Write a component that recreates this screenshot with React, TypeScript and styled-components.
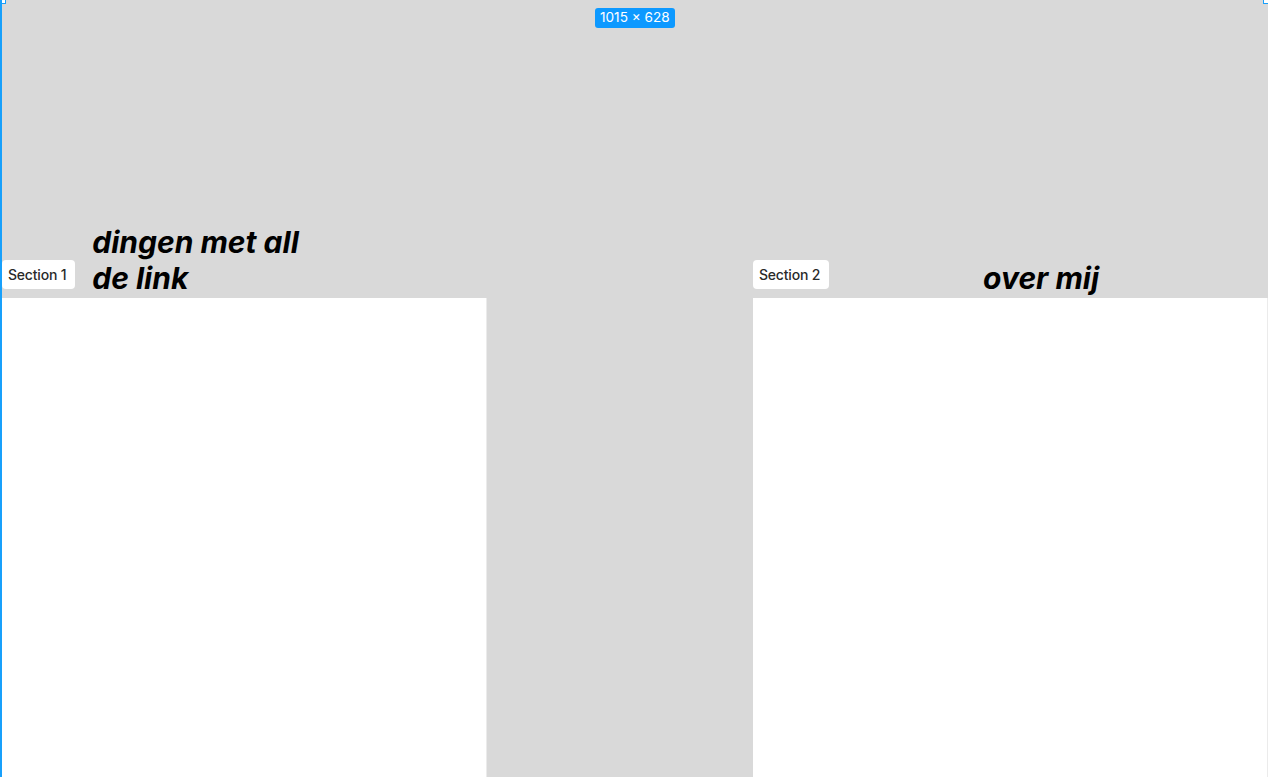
import React from "react";
import styled, { createGlobalStyle } from "styled-components";

const Global = createGlobalStyle`
  html, body { margin: 0; padding: 0; }
  body {
    background: #d9d9d9;
    font-family: Inter, "Noto Sans", sans-serif;
    overflow: hidden;
  }
`;

const Frame = styled.div`
  position: relative;
  width: 1268px;
  height: 777px;
  box-sizing: border-box;
  background: #d9d9d9;
  border-left: 2px solid #18a0fb;
  display: grid;
  grid-template-columns: 485px 266px 1fr;
  overflow: hidden;
`;

const Handle = styled.div<{ $side: "left" | "right" }>`
  position: absolute;
  top: -4px;
  ${(p) => (p.$side === "left" ? "left: -4px;" : "right: -3px;")}
  width: 6px;
  height: 6px;
  background: #fff;
  border: 1px solid #18a0fb;
`;

const SizeBadge = styled.div`
  position: absolute;
  top: 8px;
  left: 593px;
  height: 20px;
  padding: 0 5px;
  display: flex;
  align-items: center;
  background: #0d99ff;
  color: #fff;
  border-radius: 3px;
  font-size: 13.6px;
  line-height: 1;
  white-space: nowrap;
`;

const Column = styled.div`
  display: flex;
  flex-direction: column;
  min-width: 0;
`;

const Header = styled.div`
  height: 298px;
  display: flex;
  align-items: flex-end;
`;

const SectionLabel = styled.div`
  height: 29px;
  margin-bottom: 9px;
  padding: 0 9px 0 6px;
  display: flex;
  align-items: center;
  background: #fff;
  border-radius: 4px;
  color: #2a2a2a;
  font-size: 14px;
  font-weight: 500;
  letter-spacing: -0.2px;
  white-space: nowrap;
  flex-shrink: 0;
`;

const Heading = styled.h2<{ $offset: number }>`
  margin: 0 0 2px ${(p) => p.$offset}px;
  font-family: Inter, "Noto Sans", sans-serif;
  font-size: 30px;
  font-weight: 700;
  font-style: italic;
  line-height: 36px;
  color: #000;
`;

const Panel = styled.div`
  flex: 1;
  background: #fff;
  border-right: 1px solid #ebebeb;
`;

export default function App() {
  return (
    <>
      <Global />
      <Frame>
        <Handle $side="left" />
        <Handle $side="right" />
        <SizeBadge>1015 × 628</SizeBadge>
        <Column>
          <Header>
            <SectionLabel>Section 1</SectionLabel>
            <Heading $offset={17}>
              dingen met all
              <br />
              de link
            </Heading>
          </Header>
          <Panel />
        </Column>
        <Column />
        <Column>
          <Header>
            <SectionLabel>Section 2</SectionLabel>
            <Heading $offset={154}>over mij</Heading>
          </Header>
          <Panel />
        </Column>
      </Frame>
    </>
  );
}
